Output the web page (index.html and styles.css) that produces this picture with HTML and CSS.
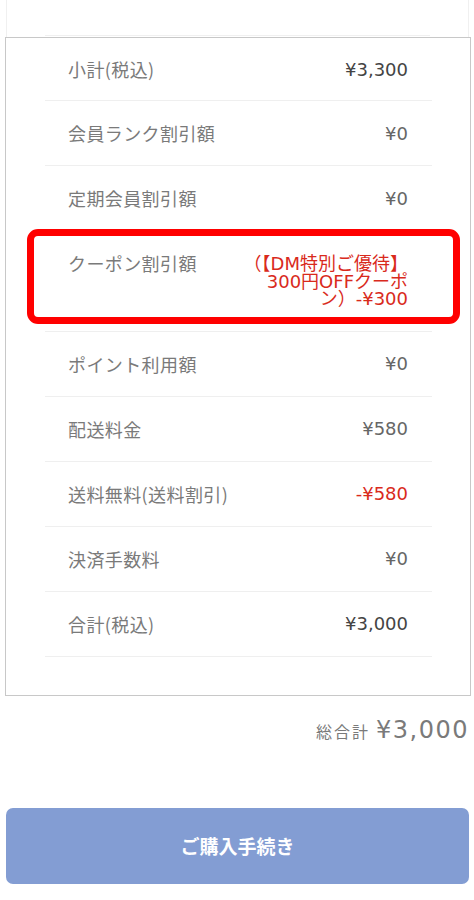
FILE: index.html
```html
<html lang="ja">
<head>
    <meta charset="UTF-8">
    <meta name="viewport" content="width=device-width, initial-scale=1.0">
    <title>ご注文内容の確認</title>
    <link rel="stylesheet" href="styles.css">
</head>
<body>
    <!-- 上の商品ボックス(切れている部分) -->
    <div class="prev-box">
        <div class="prev-line"></div>
    </div>

    <div class="summary-box">
        <div class="summary-row first">
            <span class="label">小計(税込)</span>
            <span class="value dark">¥3,300</span>
        </div>
        <div class="summary-row">
            <span class="label">会員ランク割引額</span>
            <span class="value">¥0</span>
        </div>
        <div class="summary-row">
            <span class="label">定期会員割引額</span>
            <span class="value">¥0</span>
        </div>
        <div class="summary-row coupon-row">
            <span class="label">クーポン割引額</span>
            <span class="value red coupon-value">（【DM特別ご優待】300円OFFクーポン）-¥300</span>
            <div class="highlight"></div>
        </div>
        <div class="summary-row">
            <span class="label">ポイント利用額</span>
            <span class="value">¥0</span>
        </div>
        <div class="summary-row">
            <span class="label">配送料金</span>
            <span class="value">¥580</span>
        </div>
        <div class="summary-row">
            <span class="label">送料無料(送料割引)</span>
            <span class="value red">-¥580</span>
        </div>
        <div class="summary-row">
            <span class="label">決済手数料</span>
            <span class="value">¥0</span>
        </div>
        <div class="summary-row">
            <span class="label">合計(税込)</span>
            <span class="value dark">¥3,000</span>
        </div>
    </div>

    <div class="grand-total">
        <span class="grand-label">総合計</span>
        <span class="grand-price">¥3,000</span>
    </div>

    <button class="purchase-button">ご購入手続き</button>
</body>
</html>
```

FILE: styles.css
```css
body {
    margin: 0;
    background-color: #fff;
    font-family: "Noto Sans CJK JP", sans-serif;
}
.prev-box {
    height: 37px;
    margin: 0 5px 0 6px;
    border-left: 1px solid #f0f0f0;
    border-right: 1px solid #f0f0f0;
    padding: 0 38px 0 38px;
    display: flex;
    align-items: flex-end;
}
.prev-line {
    flex: 1;
    height: 1px;
    margin-bottom: 1px;
    background-color: #f0f0f0;
}
.summary-box {
    width: 466px;
    box-sizing: border-box;
    margin-left: 5px;
    border: 1px solid #c8c8c8;
    padding: 0 38px 38px 39px;
}
.summary-row {
    display: flex;
    justify-content: space-between;
    align-items: center;
    height: 64px;
    padding: 0 24px 0 23px;
    border-bottom: 1px solid #efefef;
    position: relative;
}
.summary-row.first {
    height: 62px;
}
.label {
    font-size: 18px;
    letter-spacing: 0.4px;
    color: #7a7a7a;
    flex-shrink: 0;
}
.value {
    font-family: "DejaVu Sans", "Noto Sans CJK JP", sans-serif;
    font-size: 18px;
    color: #666;
    text-align: right;
}
.value.dark {
    color: #444;
}
.value.red {
    color: #d92a1c;
}
.coupon-row {
    height: auto;
    align-items: flex-start;
    padding-top: 24px;
    padding-bottom: 23px;
}
.coupon-row .label {
    line-height: 17.5px;
}
.coupon-value {
    width: 176px;
    line-height: 17.5px;
}
.highlight {
    position: absolute;
    left: -18px;
    top: -2px;
    width: 433px;
    height: 95px;
    box-sizing: border-box;
    border: 7px solid #ff0000;
    border-radius: 11px;
}
.grand-total {
    display: flex;
    justify-content: flex-end;
    align-items: baseline;
    gap: 6px;
    margin-top: 20px;
    padding-right: 5px;
    color: #7a7a7a;
}
.grand-label {
    font-size: 16px;
    letter-spacing: 2px;
}
.grand-price {
    font-family: "DejaVu Sans", sans-serif;
    font-size: 24px;
    letter-spacing: 1.5px;
}
.purchase-button {
    display: block;
    width: 463px;
    height: 76px;
    margin: 64px 0 0 6px;
    border: none;
    border-radius: 7px;
    background-color: #839dd3;
    color: #fff;
    font-family: "Noto Sans CJK JP", sans-serif;
    font-size: 19px;
    font-weight: 700;
}
```
